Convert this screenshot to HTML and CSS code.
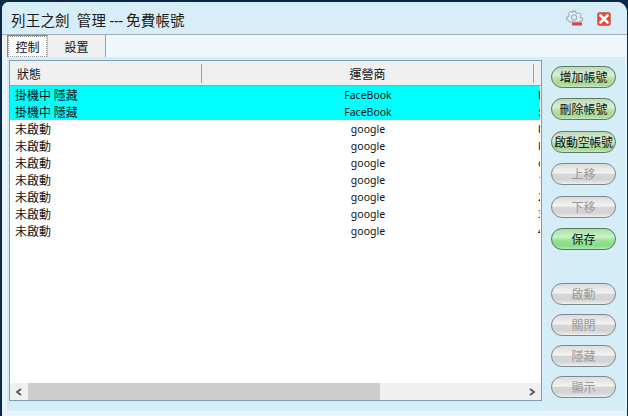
FILE: index.html
```html
<!DOCTYPE html>
<html lang="zh-Hant">
<head>
<meta charset="utf-8">
<title>列王之劍 管理</title>
<link rel="stylesheet" href="styles.css">
</head>
<body>
<div class="window">
  <header class="titlebar">
    <h1 class="title">列王之劍 &nbsp;管理 <span class="dashes">---</span> 免費帳號</h1>
    <div class="win-icons">
      <svg class="gear" width="18" height="18" viewBox="0 0 18 18">
        <path d="M7.500 1h3l.4 2 1.600.7 1.700-1.100 2 2-1.100 1.700.6 1.600 2 .4v2.500h-2l-.6 1.200H4.500l-.8-1.600-2-.4v-3l2-.4.7-1.600-1.100-1.700 2-2 1.700 1.100 1.600-.7z" fill="#e6f1f6" stroke="#9a9fa3" stroke-width="1"/>
        <circle cx="9" cy="7.500" r="2.800" fill="#d5edf7" stroke="#9a9fa3"/>
        <rect x="7" y="12.500" width="10" height="3" fill="#d8414a"/>
      </svg>
      <svg class="close" width="14" height="14" viewBox="0 0 14 14">
        <rect x="0.500" y="0.500" width="13" height="13" rx="2" fill="#e8483c" stroke="#c9746a"/>
        <path d="M3.500 3.500l7 7M10.500 3.500l-7 7" stroke="#fff" stroke-width="2.600" stroke-linecap="round"/>
      </svg>
    </div>
  </header>
  <nav class="tabs">
    <span class="tab tab-active"><span class="tab-focus">控制</span></span>
    <span class="tab">設置</span>
  </nav>
  <main class="panel">
    <section class="list">
      <div class="list-head">
        <div class="hcell col-status">狀態</div>
        <div class="hcell col-op">運營商</div>
      </div>
      <div class="rows">
        <div class="row row-on"><span class="col-status">掛機中 隱藏</span><span class="col-op">FaceBook</span><span class="col-x">l</span></div>
        <div class="row row-on"><span class="col-status">掛機中 隱藏</span><span class="col-op">FaceBook</span><span class="col-x">:</span></div>
        <div class="row"><span class="col-status">未啟動</span><span class="col-op">google</span><span class="col-x">k</span></div>
        <div class="row"><span class="col-status">未啟動</span><span class="col-op">google</span><span class="col-x">l</span></div>
        <div class="row"><span class="col-status">未啟動</span><span class="col-op">google</span><span class="col-x">c</span></div>
        <div class="row"><span class="col-status">未啟動</span><span class="col-op">google</span><span class="col-x">1</span></div>
        <div class="row"><span class="col-status">未啟動</span><span class="col-op">google</span><span class="col-x">2</span></div>
        <div class="row"><span class="col-status">未啟動</span><span class="col-op">google</span><span class="col-x">3</span></div>
        <div class="row"><span class="col-status">未啟動</span><span class="col-op">google</span><span class="col-x">4</span></div>
      </div>
      <div class="hscroll">
        <span class="arrow"><svg width="8" height="8" viewBox="0 0 8 8"><path d="M6 1L2 4l4 3" fill="none" stroke="#555" stroke-width="1.800"/></svg></span>
        <span class="track"><span class="thumb"></span></span>
        <span class="arrow"><svg width="8" height="8" viewBox="0 0 8 8"><path d="M2 1l4 3-4 3" fill="none" stroke="#555" stroke-width="1.800"/></svg></span>
      </div>
    </section>
    <aside class="actions">
      <div class="group group-top">
        <button class="pill pill-on">增加帳號</button>
        <button class="pill pill-on">刪除帳號</button>
        <button class="pill pill-on pill-wide">啟動空帳號</button>
        <button class="pill pill-off">上移</button>
        <button class="pill pill-off">下移</button>
        <button class="pill pill-green">保存</button>
      </div>
      <div class="group group-bottom">
        <button class="pill pill-off">啟動</button>
        <button class="pill pill-off">關閉</button>
        <button class="pill pill-off">隱藏</button>
        <button class="pill pill-off">顯示</button>
      </div>
    </aside>
  </main>
</div>
</body>
</html>
```

FILE: styles.css
```css
* { box-sizing: border-box; }
html, body { margin: 0; padding: 0; height: 100%; }
body {
  width: 628px;
  height: 416px;
  overflow: hidden;
  background: #0b2a4a;
  font-family: "Noto Sans CJK TC", "Liberation Sans", sans-serif;
  font-size: 12px;
  color: #111;
}
.window {
  margin: 2px 0 0 2px;
  width: 625px;
  height: 414px;
  border-radius: 7px 10px 0 0;
  background: #e6f5fb;
  display: flex;
  flex-direction: column;
  overflow: hidden;
}
.titlebar {
  height: 32px;
  flex: none;
  display: flex;
  align-items: center;
  justify-content: space-between;
  padding: 2px 16px 0 9px;
  background: #d7eef8;
}
.title {
  margin: 0;
  font-size: 14.500px;
  font-weight: 400;
  letter-spacing: 0.200px;
  color: #1a1a1a;
  white-space: nowrap;
}
.dashes { font-family: "Liberation Sans", sans-serif; letter-spacing: -0.500px; }
.win-icons { display: flex; align-items: center; gap: 14px; }
.tabs {
  height: 23px;
  flex: none;
  display: flex;
  border-top: 1px solid #a3aeb4;
  background: linear-gradient(to right, #f0f0f0 103px, #eef7fb 103px);
  padding-left: 5px;
}
.tab {
  width: 53px;
  margin-left: 5px;
  padding-right: 5px;
  display: flex;
  align-items: center;
  justify-content: center;
  border-right: 1px solid #a0a0a0;
  font-size: 12px;
}
.tab-active {
  width: 41px;
  margin-left: 0;
  padding-right: 0;
  background: #fbfbfb;
  border-top: 1px solid #8a8a8a;
  border-left: 1px solid #8a8a8a;
  border-right: 1px solid #c4c4c4;
}
.tab-focus { display: block; text-align: center; line-height: 19px; width: 100%; border: 1px dotted #999; }
.panel {
  flex: 1;
  min-height: 0;
  display: flex;
  margin: 0 2px 5px 5px;
  padding: 3px 8px 0 2px;
  background: #d5edf7;
}
.list {
  width: 533px;
  height: 341px;
  flex: none;
  background: #fff;
  border: 1px solid #7f9db0;
  display: flex;
  flex-direction: column;
  overflow: hidden;
}
.list-head {
  height: 25px;
  flex: none;
  display: flex;
  background: #f0f0f0;
  border-bottom: 1px solid #90a4b0;
  padding: 3px 0 2px;
}
.hcell {
  display: flex;
  align-items: center;
  border-right: 1px solid #a0a0a0;
  font-size: 12px;
  padding-left: 7px;
}
.hcell.col-status { width: 192px; flex: none; }
.hcell.col-op { width: 332px; flex: none; justify-content: center; padding-left: 0; }
.rows { flex: 1; min-height: 0; padding-right: 1px; }
.row {
  height: 17px;
  display: flex;
  align-items: center;
  font-size: 12px;
  line-height: 17px;
  white-space: nowrap;
}
.row-on { background: #00ffff; }
.row .col-status { width: 192px; flex: none; padding-left: 5px; }
.row .col-op { width: 332px; height: 17px; flex: none; padding-top: 1px; line-height: 16px; text-align: center; font-family: "Noto Sans", sans-serif; font-size: 10.500px; }
.row .col-x { flex: 1; overflow: hidden; padding-left: 4px; font-family: "Noto Sans", sans-serif; font-size: 11px; }
.hscroll {
  height: 17px;
  flex: none;
  display: flex;
  background: #f0f0f0;
}
.arrow {
  width: 18px;
  flex: none;
  display: flex;
  align-items: center;
  justify-content: center;
}
.track { flex: 1; display: block; }
.thumb { display: block; width: 352px; height: 100%; background: #cdcdcd; }
.actions {
  flex: 1;
  display: flex;
  flex-direction: column;
  padding: 6px 0 0 9px;
}
.group { display: flex; flex-direction: column; }
.group-top { gap: 10.400px; }
.group-bottom { gap: 9px; margin-top: 33px; }
.pill {
  width: 65px;
  height: 22px;
  padding: 0;
  border-radius: 11px;
  font-family: inherit;
  font-size: 12px;
  line-height: 20px;
  text-align: center;
  white-space: nowrap;
  overflow: hidden;
}
.pill-on {
  border: 1px solid #5f7a62;
  color: #111;
  background: linear-gradient(#bcd9b4 0%, #dcefd6 40%, #b9dfae 55%, #a5d898 85%, #c5e8ba 100%);
}
.pill-green {
  border: 1px solid #557a58;
  color: #111;
  background: linear-gradient(#a9dfa6 0%, #cbf1c6 40%, #97e492 55%, #86dc86 85%, #b2ecaf 100%);
}
.pill-off {
  border: 1px solid #7f878c;
  color: #9a9a9a;
  background: linear-gradient(#dcdcdc 0%, #f3f3f3 45%, #d6d6d6 52%, #d4d4d4 80%, #efefef 100%);
}
.pill-wide { letter-spacing: -0.300px; }
```
